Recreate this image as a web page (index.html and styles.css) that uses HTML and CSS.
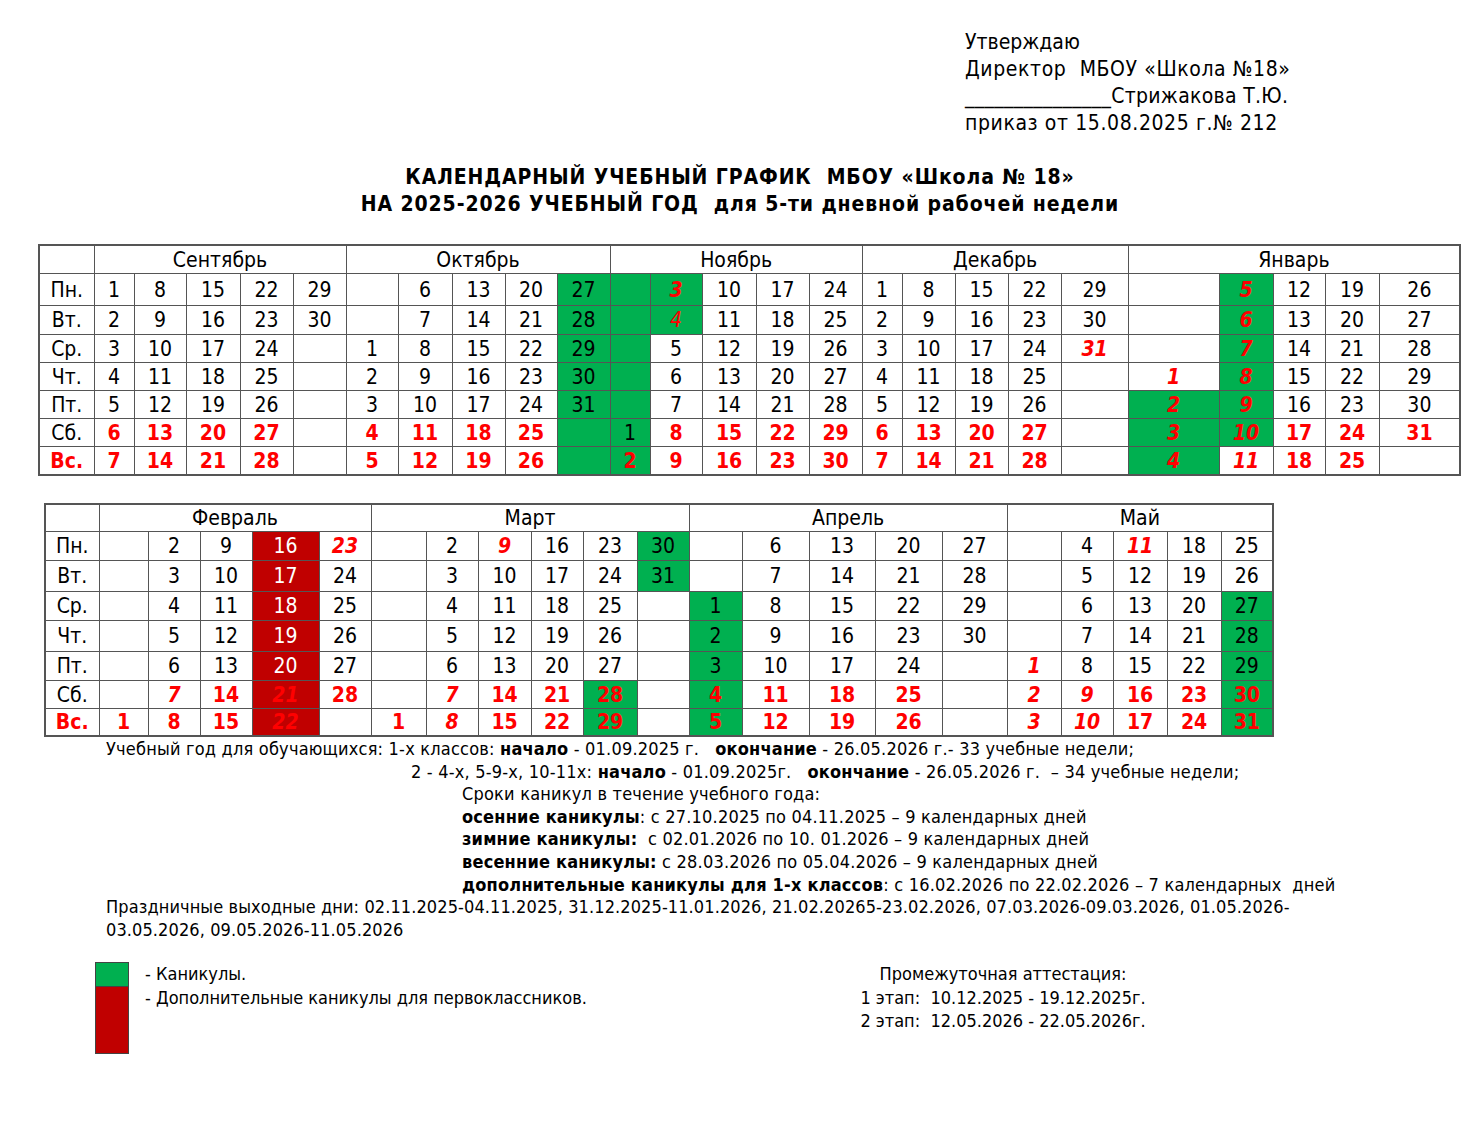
FILE: index.html
```html
<!DOCTYPE html>
<html lang="ru">
<head>
<meta charset="utf-8">
<title>Календарный учебный график</title>
<link rel="stylesheet" href="styles.css">
</head>
<body>
<div class="page">
  <div class="approve">
    <div>Утверждаю</div>
    <div class="wide">Директор&nbsp; МБОУ «Школа №18»</div>
    <div>_______________Стрижакова Т.Ю.</div>
    <div class="wide">приказ от 15.08.2025 г.№ 212</div>
  </div>

  <div class="title">
    <div>КАЛЕНДАРНЫЙ УЧЕБНЫЙ ГРАФИК&nbsp; МБОУ «Школа № 18»</div>
    <div>НА 2025-2026 УЧЕБНЫЙ ГОД&nbsp; для 5-ти дневной рабочей недели</div>
  </div>

  <table class="cal cal-top">
    <colgroup>
      <col class="w55">
      <col class="w40"><col class="w52"><col class="w54"><col class="w53"><col class="w53">
      <col class="w52"><col class="w54"><col class="w53"><col class="w52"><col class="w53">
      <col class="w40"><col class="w52"><col class="w54"><col class="w53"><col class="w53">
      <col class="w40"><col class="w53"><col class="w53"><col class="w53"><col class="w67">
      <col class="w91"><col class="w54"><col class="w52"><col class="w54"><col class="w81">
    </colgroup>
    <tr class="t-hd">
      <td></td><td colspan="5">Сентябрь</td><td colspan="5">Октябрь</td><td colspan="5">Ноябрь</td><td colspan="5">Декабрь</td><td colspan="5">Январь</td>
    </tr>
    <tr class="t-mo">
      <td class="day">Пн.</td>
      <td>1</td><td>8</td><td>15</td><td>22</td><td>29</td>
      <td></td><td>6</td><td>13</td><td>20</td><td class="g">27</td>
      <td class="g"></td><td class="g ri">3</td><td>10</td><td>17</td><td>24</td>
      <td>1</td><td>8</td><td>15</td><td>22</td><td>29</td>
      <td></td><td class="g ri">5</td><td>12</td><td>19</td><td>26</td>
    </tr>
    <tr class="t-tu">
      <td class="day">Вт.</td>
      <td>2</td><td>9</td><td>16</td><td>23</td><td>30</td>
      <td></td><td>7</td><td>14</td><td>21</td><td class="g">28</td>
      <td class="g"></td><td class="g it">4</td><td>11</td><td>18</td><td>25</td>
      <td>2</td><td>9</td><td>16</td><td>23</td><td>30</td>
      <td></td><td class="g ri">6</td><td>13</td><td>20</td><td>27</td>
    </tr>
    <tr class="t-row">
      <td class="day">Ср.</td>
      <td>3</td><td>10</td><td>17</td><td>24</td><td></td>
      <td>1</td><td>8</td><td>15</td><td>22</td><td class="g">29</td>
      <td class="g"></td><td>5</td><td>12</td><td>19</td><td>26</td>
      <td>3</td><td>10</td><td>17</td><td>24</td><td class="ri">31</td>
      <td></td><td class="g ri">7</td><td>14</td><td>21</td><td>28</td>
    </tr>
    <tr class="t-row">
      <td class="day">Чт.</td>
      <td>4</td><td>11</td><td>18</td><td>25</td><td></td>
      <td>2</td><td>9</td><td>16</td><td>23</td><td class="g">30</td>
      <td class="g"></td><td>6</td><td>13</td><td>20</td><td>27</td>
      <td>4</td><td>11</td><td>18</td><td>25</td><td></td>
      <td class="ri">1</td><td class="g ri">8</td><td>15</td><td>22</td><td>29</td>
    </tr>
    <tr class="t-row">
      <td class="day">Пт.</td>
      <td>5</td><td>12</td><td>19</td><td>26</td><td></td>
      <td>3</td><td>10</td><td>17</td><td>24</td><td class="g">31</td>
      <td class="g"></td><td>7</td><td>14</td><td>21</td><td>28</td>
      <td>5</td><td>12</td><td>19</td><td>26</td><td></td>
      <td class="g ri">2</td><td class="g ri">9</td><td>16</td><td>23</td><td>30</td>
    </tr>
    <tr class="t-sa">
      <td class="day">Сб.</td>
      <td class="r">6</td><td class="r">13</td><td class="r">20</td><td class="r">27</td><td></td>
      <td class="r">4</td><td class="r">11</td><td class="r">18</td><td class="r">25</td><td class="g"></td>
      <td class="g">1</td><td class="r">8</td><td class="r">15</td><td class="r">22</td><td class="r">29</td>
      <td class="r">6</td><td class="r">13</td><td class="r">20</td><td class="r">27</td><td></td>
      <td class="g ri">3</td><td class="g ri">10</td><td class="r">17</td><td class="r">24</td><td class="r">31</td>
    </tr>
    <tr class="t-row">
      <td class="day r">Вс.</td>
      <td class="r">7</td><td class="r">14</td><td class="r">21</td><td class="r">28</td><td></td>
      <td class="r">5</td><td class="r">12</td><td class="r">19</td><td class="r">26</td><td class="g"></td>
      <td class="g r">2</td><td class="r">9</td><td class="r">16</td><td class="r">23</td><td class="r">30</td>
      <td class="r">7</td><td class="r">14</td><td class="r">21</td><td class="r">28</td><td></td>
      <td class="g ri">4</td><td class="ri">11</td><td class="r">18</td><td class="r">25</td><td></td>
    </tr>
  </table>

  <table class="cal cal-bottom">
    <colgroup>
      <col class="w54">
      <col class="w49"><col class="w52"><col class="w52"><col class="w67"><col class="w52">
      <col class="w55"><col class="w52"><col class="w53"><col class="w52"><col class="w54"><col class="w52">
      <col class="w53"><col class="w67"><col class="w66"><col class="w67"><col class="w65">
      <col class="w54"><col class="w52"><col class="w54"><col class="w54"><col class="w52">
    </colgroup>
    <tr class="b-hd">
      <td></td><td colspan="5">Февраль</td><td colspan="6">Март</td><td colspan="5">Апрель</td><td colspan="5">Май</td>
    </tr>
    <tr class="b-sm">
      <td class="day">Пн.</td>
      <td></td><td>2</td><td>9</td><td class="d">16</td><td class="ri">23</td>
      <td></td><td>2</td><td class="ri">9</td><td>16</td><td>23</td><td class="g">30</td>
      <td></td><td>6</td><td>13</td><td>20</td><td>27</td>
      <td></td><td>4</td><td class="ri">11</td><td>18</td><td>25</td>
    </tr>
    <tr class="b-lg">
      <td class="day">Вт.</td>
      <td></td><td>3</td><td>10</td><td class="d">17</td><td>24</td>
      <td></td><td>3</td><td>10</td><td>17</td><td>24</td><td class="g">31</td>
      <td></td><td>7</td><td>14</td><td>21</td><td>28</td>
      <td></td><td>5</td><td>12</td><td>19</td><td>26</td>
    </tr>
    <tr class="b-sm">
      <td class="day">Ср.</td>
      <td></td><td>4</td><td>11</td><td class="d">18</td><td>25</td>
      <td></td><td>4</td><td>11</td><td>18</td><td>25</td><td></td>
      <td class="g">1</td><td>8</td><td>15</td><td>22</td><td>29</td>
      <td></td><td>6</td><td>13</td><td>20</td><td class="g">27</td>
    </tr>
    <tr class="b-lg">
      <td class="day">Чт.</td>
      <td></td><td>5</td><td>12</td><td class="d">19</td><td>26</td>
      <td></td><td>5</td><td>12</td><td>19</td><td>26</td><td></td>
      <td class="g">2</td><td>9</td><td>16</td><td>23</td><td>30</td>
      <td></td><td>7</td><td>14</td><td>21</td><td class="g">28</td>
    </tr>
    <tr class="b-sm">
      <td class="day">Пт.</td>
      <td></td><td>6</td><td>13</td><td class="d">20</td><td>27</td>
      <td></td><td>6</td><td>13</td><td>20</td><td>27</td><td></td>
      <td class="g">3</td><td>10</td><td>17</td><td>24</td><td></td>
      <td class="ri">1</td><td>8</td><td>15</td><td>22</td><td class="g">29</td>
    </tr>
    <tr class="b-row">
      <td class="day">Сб.</td>
      <td></td><td class="ri">7</td><td class="r">14</td><td class="d ri">21</td><td class="r">28</td>
      <td></td><td class="ri">7</td><td class="r">14</td><td class="r">21</td><td class="g r">28</td><td></td>
      <td class="g r">4</td><td class="r">11</td><td class="r">18</td><td class="r">25</td><td></td>
      <td class="ri">2</td><td class="ri">9</td><td class="r">16</td><td class="r">23</td><td class="g r">30</td>
    </tr>
    <tr class="b-last">
      <td class="day r">Вс.</td>
      <td class="r">1</td><td class="r">8</td><td class="r">15</td><td class="d ri">22</td><td></td>
      <td class="r">1</td><td class="ri">8</td><td class="r">15</td><td class="r">22</td><td class="g r">29</td><td></td>
      <td class="g r">5</td><td class="r">12</td><td class="r">19</td><td class="r">26</td><td></td>
      <td class="ri">3</td><td class="ri">10</td><td class="r">17</td><td class="r">24</td><td class="g r">31</td>
    </tr>
  </table>

  <div class="notes">
    <div class="ln ind0">Учебный год для обучающихся: 1-х классов: <b>начало</b> - 01.09.2025 г.&nbsp;&nbsp; <b>окончание</b> - 26.05.2026 г.- 33 учебные недели;</div>
    <div class="ln ind1">2 - 4-х, 5-9-х, 10-11х: <b>начало</b> - 01.09.2025г.&nbsp;&nbsp; <b>окончание</b> - 26.05.2026 г.&nbsp; – 34 учебные недели;</div>
    <div class="ln ind2">Сроки каникул в течение учебного года:</div>
    <div class="ln ind2"><b>осенние каникулы</b>: с 27.10.2025 по 04.11.2025 – 9 календарных дней</div>
    <div class="ln ind2"><b>зимние каникулы:</b>&nbsp; с 02.01.2026 по 10. 01.2026 – 9 календарных дней</div>
    <div class="ln ind2"><b>весенние каникулы:</b> с 28.03.2026 по 05.04.2026 – 9 календарных дней</div>
    <div class="ln ind2"><b>дополнительные каникулы для 1-х классов</b>: с 16.02.2026 по 22.02.2026 – 7 календарных&nbsp; дней</div>
    <div class="ln ind0 wrap">Праздничные выходные дни: 02.11.2025-04.11.2025, 31.12.2025-11.01.2026, 21.02.20265-23.02.2026, 07.03.2026-09.03.2026, 01.05.2026-03.05.2026, 09.05.2026-11.05.2026</div>
  </div>

  <div class="legend">
    <div class="legend-left">
      <div class="boxes">
        <div class="box box-green"></div>
        <div class="box box-red"></div>
      </div>
      <div class="labels">
        <div>- Каникулы.</div>
        <div>- Дополнительные каникулы для первоклассников.</div>
      </div>
    </div>
    <div class="attest">
      <div>Промежуточная аттестация:</div>
      <div>1 этап:&nbsp; 10.12.2025 - 19.12.2025г.</div>
      <div>2 этап:&nbsp; 12.05.2026 - 22.05.2026г.</div>
    </div>
  </div>
</div>
</body>
</html>
```

FILE: styles.css
```css
html, body {
  margin: 0;
  padding: 0;
  background: #ffffff;
}

body {
  font-family: "DejaVu Sans Condensed", "DejaVu Sans", sans-serif;
  font-stretch: condensed;
  color: #000;
}

.page {
  width: 1480px;
  padding-top: 29px;
}

.approve {
  padding-left: 965px;
  font-size: 21px;
  line-height: 27px;
  letter-spacing: 0.3px;
}

.approve div:first-child { letter-spacing: 0; }
.approve .wide { letter-spacing: 0.6px; }

.title {
  margin-top: 27px;
  text-align: center;
  font-weight: bold;
  font-size: 21px;
  line-height: 27px;
  letter-spacing: 0.9px;
}

.cal {
  border-collapse: collapse;
  table-layout: fixed;
  font-size: 21px;
  border: 2px solid #555;
}

.cal td {
  border: 1px solid #555;
  text-align: center;
  vertical-align: middle;
  padding: 0;
  line-height: 20px;
  white-space: nowrap;
}

.cal-top {
  margin-top: 26px;
  margin-left: 38px;
  width: 1421px;
}

.cal-bottom {
  margin-top: 27px;
  margin-left: 44px;
  width: 1228px;
}

/* top table rows */
.t-hd td { height: 27px; }
.t-mo td { height: 31px; }
.t-tu td { height: 28px; }
.t-row td { height: 27px; }
.t-sa td { height: 27px; }

/* bottom table rows */
.b-hd td { height: 26px; }
.b-sm td { height: 28px; }
.b-lg td { height: 30px; }
.b-row td { height: 27px; }
.b-last td { height: 26px; }

.w40 { width: 40px; }
.w49 { width: 49px; }
.w52 { width: 52px; }
.w53 { width: 53px; }
.w54 { width: 54px; }
.w55 { width: 55px; }
.w65 { width: 65px; }
.w66 { width: 66px; }
.w67 { width: 67px; }
.w81 { width: 81px; }
.w91 { width: 91px; }

.cal td.g { background: #00b050; }
.cal td.d { background: #c00000; color: #ffffff; }
.cal td.r { color: #ff0000; font-weight: bold; }
.cal td.ri { color: #ff0000; font-weight: bold; font-style: italic; }
.cal td.it { color: #ff0000; font-style: italic; }
.cal td.day.r { color: #ff0000; }

.notes {
  margin-top: 1px;
  font-size: 18px;
  line-height: 22.6px;
  letter-spacing: 0.2px;
}

.ln { white-space: pre; }
.ln.wrap { white-space: normal; width: 1220px; letter-spacing: 0.1px; }
.ind0 { padding-left: 106px; }
.ind1 { padding-left: 411px; }
.ind2 { padding-left: 462px; }

.legend {
  margin-top: 21px;
  display: flex;
  font-size: 18px;
  line-height: 23.5px;
}

.legend-left {
  display: flex;
  padding-left: 95px;
  width: 763px;
  gap: 16px;
}

.boxes {
  display: flex;
  flex-direction: column;
  border: 1px solid #444;
}

.box { width: 32px; }
.box-green { height: 23px; background: #00b050; border-bottom: 1px solid #444; }
.box-red { height: 66px; background: #c00000; }

.labels { padding-top: 0; }

.attest {
  width: 290px;
  text-align: center;
}
```
